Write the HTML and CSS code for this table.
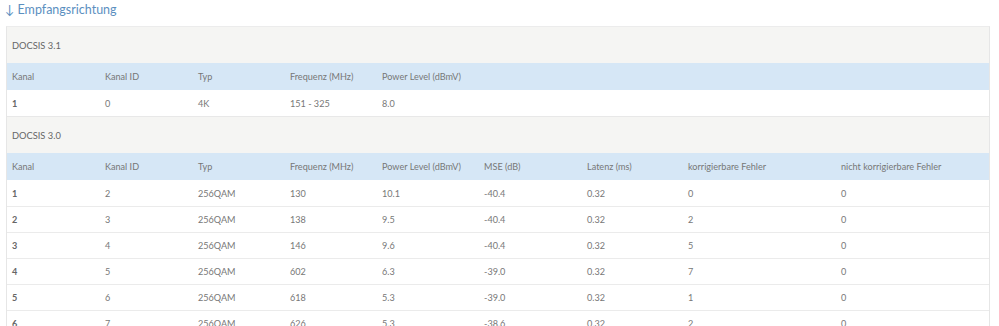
FILE: index.html
```html
<!DOCTYPE html>
<html lang="de">
<head>
<meta charset="utf-8">
<link rel="stylesheet" href="styles.css">
</head>
<body>
<h2 class="title">↓ Empfangsrichtung</h2>
<div class="box">
<table class="tbl">
<colgroup>
<col style="width:93px"><col style="width:93px"><col style="width:92px"><col style="width:92px"><col style="width:102px"><col style="width:103px"><col style="width:101px"><col style="width:153px"><col style="width:153px">
</colgroup>
<tbody>
<tr class="sec first"><td colspan="9">DOCSIS 3.1</td></tr>
<tr class="head"><td>Kanal</td><td>Kanal ID</td><td>Typ</td><td>Frequenz (MHz)</td><td>Power Level (dBmV)</td><td></td><td></td><td></td><td></td></tr>
<tr class="row"><td class="k">1</td><td>0</td><td>4K</td><td>151 - 325</td><td>8.0</td><td></td><td></td><td></td><td></td></tr>
<tr class="sec"><td colspan="9">DOCSIS 3.0</td></tr>
<tr class="head"><td>Kanal</td><td>Kanal ID</td><td>Typ</td><td>Frequenz (MHz)</td><td>Power Level (dBmV)</td><td>MSE (dB)</td><td>Latenz (ms)</td><td>korrigierbare Fehler</td><td>nicht korrigierbare Fehler</td></tr>
<tr class="row"><td class="k">1</td><td>2</td><td>256QAM</td><td>130</td><td>10.1</td><td>-40.4</td><td>0.32</td><td>0</td><td>0</td></tr>
<tr class="row"><td class="k">2</td><td>3</td><td>256QAM</td><td>138</td><td>9.5</td><td>-40.4</td><td>0.32</td><td>2</td><td>0</td></tr>
<tr class="row"><td class="k">3</td><td>4</td><td>256QAM</td><td>146</td><td>9.6</td><td>-40.4</td><td>0.32</td><td>5</td><td>0</td></tr>
<tr class="row"><td class="k">4</td><td>5</td><td>256QAM</td><td>602</td><td>6.3</td><td>-39.0</td><td>0.32</td><td>7</td><td>0</td></tr>
<tr class="row"><td class="k">5</td><td>6</td><td>256QAM</td><td>618</td><td>5.3</td><td>-39.0</td><td>0.32</td><td>1</td><td>0</td></tr>
<tr class="row"><td class="k">6</td><td>7</td><td>256QAM</td><td>626</td><td>5.3</td><td>-38.6</td><td>0.32</td><td>2</td><td>0</td></tr>
</tbody>
</table>
</div>
</body>
</html>
```
FILE: styles.css
```css
html, body {
  margin: 0;
  padding: 0;
  background: #fff;
  overflow: hidden;
}
body {
  font-family: Lato, "Liberation Sans", sans-serif;
  color: #777;
}
.title {
  margin: 0;
  padding: 0 0 0 5px;
  height: 26px;
  line-height: 19px;
  font-size: 12.5px;
  font-weight: normal;
  color: #5b8fbf;
}
.box {
  margin-left: 6px;
  width: 982px;
  border: 1px solid #e6e6e6;
  border-bottom: none;
  border-top-color: #ececec;
}
.tbl {
  border-collapse: collapse;
  table-layout: fixed;
  width: 982px;
  font-size: 9.1px;
}
.tbl td {
  padding: 0 0 0 5px;
  white-space: nowrap;
  overflow: hidden;
}
.sec td {
  background: #f5f5f3;
  height: 36px;
  color: #666;
  font-size: 9.3px;
  border-top: 1px solid #e8e8e8;
}
.sec.first td {
  border-top: none;
}
.head td {
  background: #d6e7f6;
  height: 27px;
  color: #777;
}
.row td {
  height: 25px;
  border-top: 1px solid #ebebeb;
}
.head + .row td {
  border-top: none;
  height: 26px;
}
.row td.k {
  font-weight: bold;
  color: #666;
}
```
